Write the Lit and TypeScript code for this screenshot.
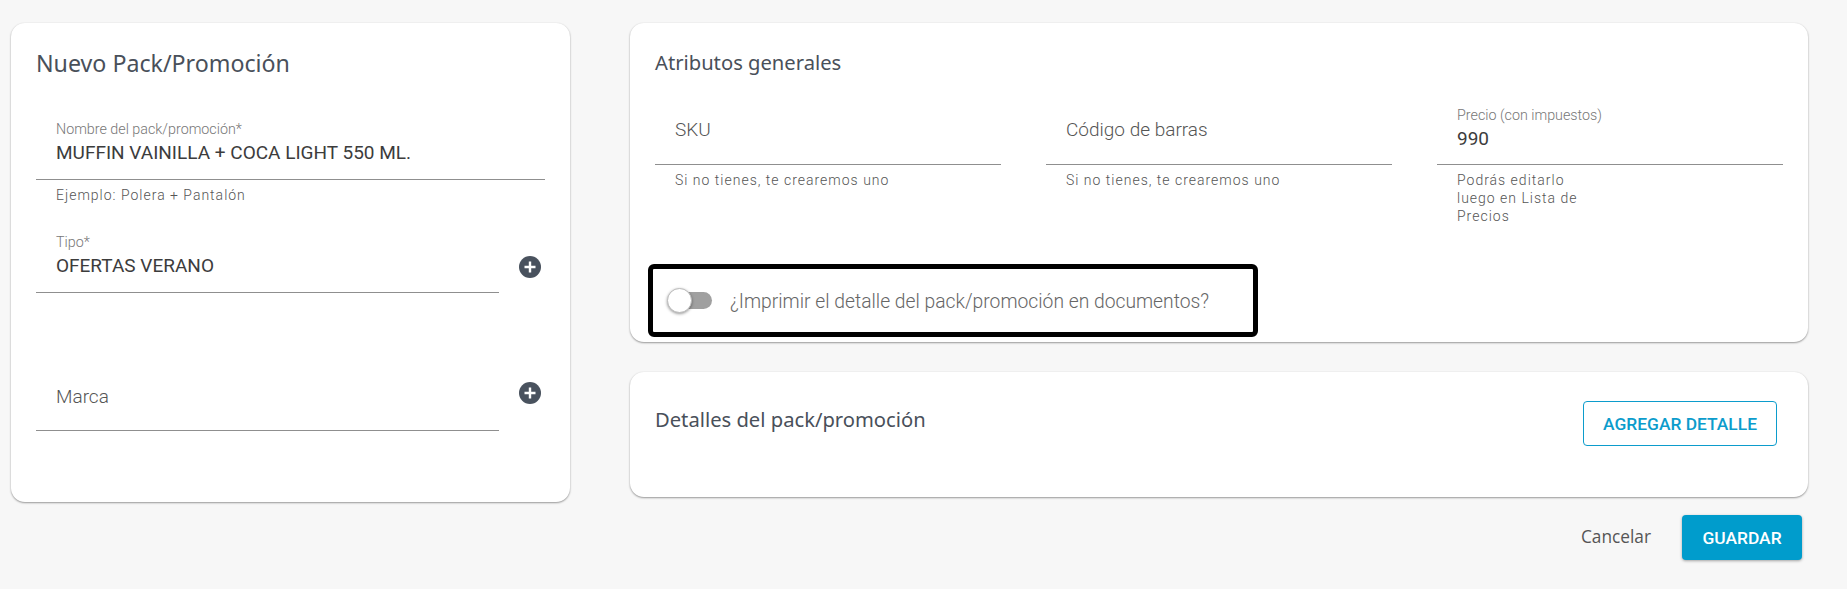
import { LitElement, html, css } from "lit";
import { customElement } from "lit/decorators.js";

@customElement("app-root")
export class AppRoot extends LitElement {
  static styles = css`
    :host {
      display: block;
      height: 589px;
      box-sizing: border-box;
      padding: 23px 0 0 11px;
      background: #f7f7f7;
      font-family: "Roboto", sans-serif;
      color: #333;
    }
    .page {
      display: flex;
      gap: 60px;
      align-items: flex-start;
    }
    .card {
      background: #fff;
      border-radius: 14px;
      box-shadow: 0 1px 2px rgba(0, 0, 0, 0.38), 0 0 2px rgba(0, 0, 0, 0.06);
      box-sizing: border-box;
    }
    .left {
      width: 559px;
      height: 479px;
      padding: 26px 25px 0;
    }
    .right {
      width: 1178px;
    }
    h2 {
      margin: 0;
      font-family: "Noto Sans", sans-serif;
      font-weight: 400;
      color: #49505a;
      line-height: 28px;
    }
    .title-big {
      font-size: 23.2px;
    }
    .title {
      font-size: 20.2px;
    }
    .field {
      box-sizing: border-box;
      height: 59px;
      padding: 0 20px;
      border-bottom: 1px solid #8f8f8f;
      flex: 1;
      min-width: 0;
    }
    .label {
      font-size: 14.3px;
      font-weight: 300;
      line-height: 16px;
      color: #777;
    }
    .value {
      font-size: 19px;
      line-height: 24px;
      margin-top: 4px;
      color: #3c3c3c;
    }
    .placeholder {
      font-size: 19px;
      font-weight: 300;
      line-height: 24px;
      color: #555;
    }
    .hint {
      font-size: 14px;
      line-height: 18px;
      letter-spacing: 1px;
      font-weight: 300;
      color: #555;
      padding: 6px 20px 0;
    }
    .name {
      margin-top: 44px;
    }
    .row {
      display: flex;
      gap: 20px;
      width: 505px;
    }
    .row-tipo {
      margin-top: 30px;
    }
    .row-marca {
      margin-top: 79px;
    }
    .row-marca .placeholder {
      padding-top: 13px;
    }
    .plus {
      flex: none;
      width: 22px;
      height: 22px;
    }
    .row-tipo .plus {
      margin-top: 22px;
    }
    .row-marca .plus {
      margin-top: 10px;
    }
    .attrs {
      height: 319px;
      padding: 25px 25px 5px;
      display: flex;
      flex-direction: column;
    }
    .grid {
      display: grid;
      grid-template-columns: repeat(3, 346px);
      column-gap: 45px;
      margin-top: 31px;
    }
    .grid .field {
      height: 58px;
    }
    .grid .value {
      margin-top: 4px;
    }
    .grid .placeholder {
      padding-top: 11px;
    }
    .narrow {
      width: 130px;
    }
    .print {
      margin: auto 0 0 -7px;
      width: 610px;
      height: 73px;
      box-sizing: border-box;
      border: 5px solid #000;
      border-radius: 6px;
      display: flex;
      align-items: center;
      padding-left: 15px;
      gap: 18px;
    }
    .switch {
      position: relative;
      width: 44px;
      height: 17px;
      border-radius: 9px;
      background: #a0a0a0;
      flex: none;
    }
    .knob {
      position: absolute;
      left: -1px;
      top: -4px;
      width: 25px;
      height: 25px;
      box-sizing: border-box;
      border-radius: 50%;
      background: #fff;
      border: 1px solid #bbb;
      box-shadow: 0 1px 3px rgba(0, 0, 0, 0.4);
    }
    .print-text {
      font-size: 19.3px;
      font-weight: 300;
      color: #666;
      padding-top: 1px;
    }
    .details {
      height: 125px;
      margin-top: 30px;
      padding: 29px 31px 0 25px;
      display: flex;
      justify-content: space-between;
      align-items: flex-start;
    }
    .details h2 {
      margin-top: 4px;
    }
    button {
      font-family: "Roboto", sans-serif;
      font-size: 17.4px;
      font-weight: 500;
      height: 45px;
      padding: 0;
      box-sizing: border-box;
      border-radius: 4px;
      cursor: pointer;
    }
    .outline {
      width: 194px;
      background: #fff;
      border: 1px solid #0c9ccc;
      color: #0c9ccc;
    }
    .footer {
      display: flex;
      justify-content: flex-end;
      align-items: center;
      gap: 31px;
      margin-top: 18px;
      padding-right: 6px;
    }
    .cancel {
      font-family: "Open Sans", sans-serif;
      font-size: 17.3px;
      color: #555;
      margin-top: -2px;
    }
    .primary {
      width: 120px;
      background: #009ccc;
      border: none;
      color: #fff;
      box-shadow: 0 1px 3px rgba(0, 0, 0, 0.35);
    }
  `;

  plusIcon() {
    return html`<svg class="plus" viewBox="0 0 22 22">
      <circle cx="11" cy="11" r="11" fill="#49525e"></circle>
      <path d="M11 5.5v11M5.5 11h11" stroke="#fff" stroke-width="2.4"></path>
    </svg>`;
  }

  render() {
    return html`
      <div class="page">
        <section class="card left">
          <h2 class="title-big">Nuevo Pack/Promoción</h2>
          <div class="field name">
            <div class="label">Nombre del pack/promoción*</div>
            <div class="value">MUFFIN VAINILLA + COCA LIGHT 550 ML.</div>
          </div>
          <div class="hint">Ejemplo: Polera + Pantalón</div>
          <div class="row row-tipo">
            <div class="field">
              <div class="label">Tipo*</div>
              <div class="value">OFERTAS VERANO</div>
            </div>
            ${this.plusIcon()}
          </div>
          <div class="row row-marca">
            <div class="field">
              <div class="placeholder">Marca</div>
            </div>
            ${this.plusIcon()}
          </div>
        </section>
        <div class="right">
          <section class="card attrs">
            <h2 class="title">Atributos generales</h2>
            <div class="grid">
              <div>
                <div class="field"><div class="placeholder">SKU</div></div>
                <div class="hint">Si no tienes, te crearemos uno</div>
              </div>
              <div>
                <div class="field">
                  <div class="placeholder">Código de barras</div>
                </div>
                <div class="hint">Si no tienes, te crearemos uno</div>
              </div>
              <div>
                <div class="field">
                  <div class="label">Precio (con impuestos)</div>
                  <div class="value">990</div>
                </div>
                <div class="hint">
                  <div class="narrow">Podrás editarlo luego en Lista de Precios</div>
                </div>
              </div>
            </div>
            <div class="print">
              <div class="switch"><div class="knob"></div></div>
              <div class="print-text">¿Imprimir el detalle del pack/promoción en documentos?</div>
            </div>
          </section>
          <section class="card details">
            <h2 class="title">Detalles del pack/promoción</h2>
            <button class="outline">AGREGAR DETALLE</button>
          </section>
          <div class="footer">
            <span class="cancel">Cancelar</span>
            <button class="primary">GUARDAR</button>
          </div>
        </div>
      </div>
    `;
  }
}
